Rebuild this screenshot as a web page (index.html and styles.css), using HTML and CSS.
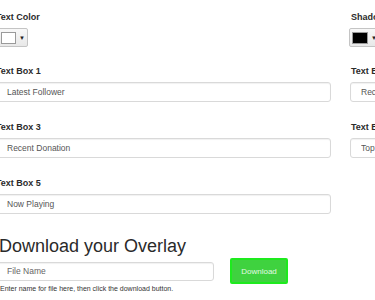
FILE: index.html
```html
<!DOCTYPE html>
<html>
<head>
<meta charset="utf-8">
<link rel="stylesheet" href="styles.css">
</head>
<body>
<div class="page">
  <div class="grid">
    <div class="field field-color">
      <label class="lbl">Text Color</label>
      <div class="picker"><span class="swatch swatch-white"></span><span class="caret">▼</span></div>
    </div>
    <div class="field field-color field-right">
      <label class="lbl">Shadow Color</label>
      <div class="picker"><span class="swatch swatch-black"></span><span class="caret">▼</span></div>
    </div>
    <div class="field">
      <label class="lbl">Text Box 1</label>
      <input class="inp" type="text" value="Latest Follower">
    </div>
    <div class="field field-right">
      <label class="lbl">Text Box 2</label>
      <input class="inp" type="text" value="Recent Subscriber">
    </div>
    <div class="field">
      <label class="lbl">Text Box 3</label>
      <input class="inp" type="text" value="Recent Donation">
    </div>
    <div class="field field-right">
      <label class="lbl">Text Box 4</label>
      <input class="inp" type="text" value="Top Donor">
    </div>
    <div class="field">
      <label class="lbl">Text Box 5</label>
      <input class="inp" type="text" value="Now Playing">
    </div>
  </div>
  <h2 class="title">Download your Overlay</h2>
  <div class="dl-row">
    <input class="inp file" type="text" placeholder="File Name">
    <button class="btn">Download</button>
  </div>
  <p class="help">Enter name for file here, then click the download button.</p>
</div>
</body>
</html>
```
FILE: styles.css
```css
html, body {
  margin: 0;
  padding: 0;
  overflow: hidden;
  background: #fff;
}
body {
  font-family: "Liberation Sans", Arial, sans-serif;
  color: #333;
}
.page {
  margin-left: -4px;
  padding-top: 11px;
  width: 700px;
}
.grid {
  display: grid;
  grid-template-columns: 335px 335px;
  column-gap: 19px;
}
.field {
  display: flex;
  flex-direction: column;
  align-items: flex-start;
  margin-bottom: 19px;
}
.lbl {
  font-size: 9px;
  font-weight: bold;
  line-height: 12px;
  color: #2b2b2b;
  margin-bottom: 5px;
}
.field-right .lbl {
  margin-left: 1px;
}
.picker {
  display: flex;
  align-items: center;
  height: 19px;
  box-sizing: border-box;
  padding: 0 2px 0 2px;
  gap: 3px;
  border: 1px solid #c4c4c4;
  border-radius: 2px;
  background: linear-gradient(#f8f8f8, #e8e8e8);
  margin-left: 2px;
}
.field-right .picker {
  margin-left: -1px;
}
.field-color {
  margin-bottom: 18px;
}
.swatch {
  width: 15px;
  height: 12px;
  box-sizing: border-box;
  border: 1px solid #9a9a9a;
}
.swatch-white { background: #fff; }
.swatch-black { background: #000; width: 16px; }
.caret {
  font-size: 6px;
  line-height: 1;
  color: #222;
}
.inp {
  display: block;
  width: 100%;
  height: 20px;
  box-sizing: border-box;
  border: 1px solid #d9d9d9;
  border-radius: 3px;
  padding: 0 10px;
  font-family: "Liberation Sans", Arial, sans-serif;
  font-size: 8.5px;
  color: #555;
  background: #fff;
  box-shadow: inset 0 1px 1px rgba(0,0,0,.06);
  outline: none;
}
.inp::placeholder {
  color: #666;
}
.title {
  font-size: 18px;
  font-weight: normal;
  line-height: 22px;
  color: #2a2a2a;
  margin: 2px 0 1px 3px;
}
.dl-row {
  display: flex;
  align-items: center;
  gap: 16px;
}
.file {
  width: 218px;
  height: 19px;
}
.btn {
  width: 58px;
  height: 26px;
  box-sizing: border-box;
  background: #3fd23f;
  border: 2px solid #1eea1e;
  border-radius: 2px;
  color: #e4f9e4;
  font-family: "Liberation Sans", Arial, sans-serif;
  font-size: 8px;
  padding: 0;
}
.help {
  margin: 0 0 0 4px;
  font-size: 7px;
  line-height: 9px;
  color: #333;
}
```
